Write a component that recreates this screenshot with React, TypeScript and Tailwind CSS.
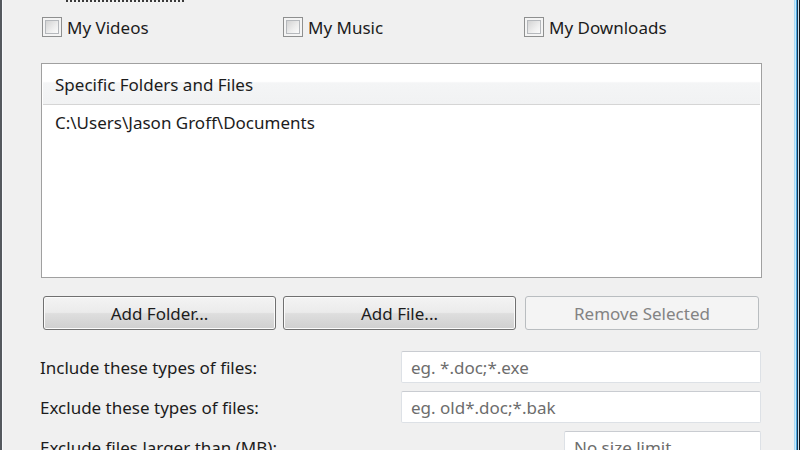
const CheckBox = ({ label }: { label: string }) => (
  <label className="flex items-center gap-[5px]">
    <span className="w-[20px] h-[20px] border border-[#8e8f8f] bg-[#f4f4f4] p-[2px]">
      <span className="block w-full h-full border border-[#b5b8bc] bg-[linear-gradient(135deg,#d3d3d3_0%,#eeeeee_60%,#fbfbfb_100%)]" />
    </span>
    <span className="text-[#1c1c1c]">{label}</span>
  </label>
);

const Button = ({ label, disabled }: { label: string; disabled?: boolean }) => (
  <button
    className={
      disabled
        ? 'w-[234px] h-[34px] rounded-[3px] border border-[#b9bdc0] bg-[#f4f4f4] text-[#838383]'
        : 'w-[233px] h-[34px] rounded-[3px] border border-[#707070] bg-[linear-gradient(to_bottom,#f3f3f3_0%,#ebebeb_48%,#dedede_52%,#cfcfcf_100%)] shadow-[inset_0_0_0_1px_#fbfbfb] text-[#1c1c1c]'
    }
  >
    {label}
  </button>
);

const Field = ({ label, placeholder, narrow }: { label: string; placeholder: string; narrow?: boolean }) => (
  <div className="shrink-0 ml-[37px] w-[721px] h-[32px] flex items-center justify-between">
    <span className="text-[#1c1c1c]">{label}</span>
    <div
      className={`${narrow ? 'w-[197px]' : 'w-[360px]'} h-full rounded-[2px] border border-[#dde1e6] border-t-[#c9ccd1] bg-white pl-[9px] flex items-center text-[#6d6d6d]`}
    >
      {placeholder}
    </div>
  </div>
);

export default function App() {
  return (
    <div
      className="w-[800px] h-[450px] overflow-hidden flex bg-[#f0f0f0] text-[17px] leading-none"
      style={{ fontFamily: '"Noto Sans", "Open Sans", sans-serif' }}
    >
      {/* window frame, left */}
      <div className="w-[2px] bg-[#55595e]" />
      <div className="w-px bg-[#f8fafd]" />

      <div className="flex-1 flex flex-col overflow-hidden">
        {/* focus rect of the item above */}
        <div className="shrink-0 ml-[63px] w-[118px] border-t-2 border-dotted border-[#3a3a3a]" />

        {/* known folders */}
        <div className="shrink-0 mt-[15px] ml-[39px] grid grid-cols-3 w-[723px]">
          <CheckBox label="My Videos" />
          <CheckBox label="My Music" />
          <CheckBox label="My Downloads" />
        </div>

        {/* folder list */}
        <div className="shrink-0 mt-[26px] ml-[38px] w-[721px] h-[215px] border border-[#a0a0a0] bg-white p-px">
          <div className="h-[40px] pl-[12px] flex items-center border-b border-[#d5d5d5] bg-[linear-gradient(to_bottom,#ffffff_0%,#ffffff_42%,#f4f5f6_46%,#f1f2f3_100%)] text-[#1c1c1c]">
            Specific Folders and Files
          </div>
          <div className="h-[34px] pl-[12px] flex items-center text-[#1c1c1c]">
            C:\Users\Jason Groff\Documents
          </div>
        </div>

        {/* list actions */}
        <div className="shrink-0 mt-[18px] ml-[40px] flex">
          <Button label="Add Folder..." />
          <div className="ml-[7px]">
            <Button label="Add File..." />
          </div>
          <div className="ml-[9px]">
            <Button label="Remove Selected" disabled />
          </div>
        </div>

        {/* filters */}
        <div className="shrink-0 mt-[21px] flex flex-col gap-[8px]">
          <Field label="Include these types of files:" placeholder="eg. *.doc;*.exe" />
          <Field label="Exclude these types of files:" placeholder="eg. old*.doc;*.bak" />
          <Field label="Exclude files larger than (MB):" placeholder="No size limit" narrow />
        </div>
      </div>

      {/* window frame, right (aero) */}
      <div className="w-px bg-[#a9d8f3]" />
      <div className="w-px bg-[#c8ecfb]" />
      <div className="w-px bg-[#4ba5df]" />
      <div className="w-px bg-[#1e3a55]" />
      <div className="w-px bg-[#cfe4f1]" />
      <div className="w-px bg-[#111111]" />
    </div>
  );
}
